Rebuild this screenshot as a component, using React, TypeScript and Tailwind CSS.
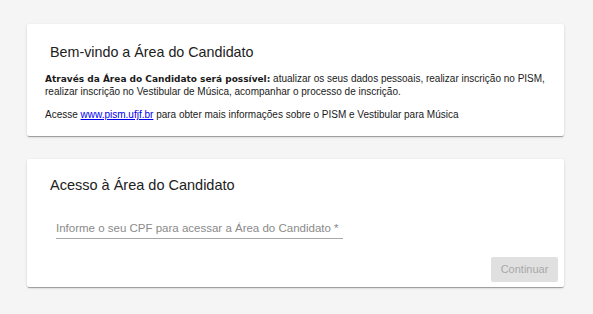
import React from "react";

const cardShadow =
  "shadow-[0_2px_1px_-1px_rgba(0,0,0,0.2),0_1px_1px_0_rgba(0,0,0,0.14),0_1px_3px_0_rgba(0,0,0,0.12)]";

const App = () => {
  return (
    <div className="min-h-[314px] w-full bg-[#f5f5f5] px-[27px] pt-[24px] font-['Liberation_Sans',Arial,sans-serif] text-[#212121]">
      {/* boas-vindas */}
      <section className={`w-[537px] h-[112px] bg-white rounded-[2px] px-[18px] pt-[19px] ${cardShadow}`}>
        <h2 className="pl-[5px] text-[14.3px] leading-[18px] font-normal text-[#212121]">
          Bem-vindo a Área do Candidato
        </h2>
        <p className="mt-[11px] text-[10px] leading-[13px] text-[#1a1a1a]">
          <b className="font-['DejaVu_Sans',Verdana,sans-serif] text-[9px] leading-none font-bold">
            Através da Área do Candidato será possível:
          </b>{" "}
          atualizar os seus dados pessoais, realizar inscrição no PISM, realizar inscrição no
          Vestibular de Música, acompanhar o processo de inscrição.
        </p>
        <p className="mt-[10px] text-[10px] leading-[13px] text-[#1a1a1a]">
          Acesse{" "}
          <a href="#" className="text-[#0000ee] underline">
            www.pism.ufjf.br
          </a>{" "}
          para obter mais informações sobre o PISM e Vestibular para Música
        </p>
      </section>

      {/* acesso */}
      <section className={`mt-[23px] w-[537px] h-[128px] bg-white rounded-[2px] flex flex-col ${cardShadow}`}>
        <h2 className="pl-[23px] pt-[16px] text-[14.5px] leading-[20px] font-normal text-[#212121]">
          Acesso à Área do Candidato
        </h2>
        <div className="ml-[29px] mt-[25px] w-[287px] border-b border-[#a8a8a8] pb-[2px]">
          <input
            className="block w-full bg-transparent text-[11.5px] leading-[15px] h-[16px] text-[#212121] placeholder:text-[#8a8a8a] outline-none"
            placeholder="Informe o seu CPF para acessar a Área do Candidato *"
          />
        </div>
        <div className="mt-auto flex justify-end pr-[6px] pb-[5px]">
          <button
            disabled
            className="h-[25px] w-[67px] rounded-[2px] bg-[#e0e0e0] text-[11px] text-[#a8a8a8]"
          >
            Continuar
          </button>
        </div>
      </section>
    </div>
  );
};

export default App;
